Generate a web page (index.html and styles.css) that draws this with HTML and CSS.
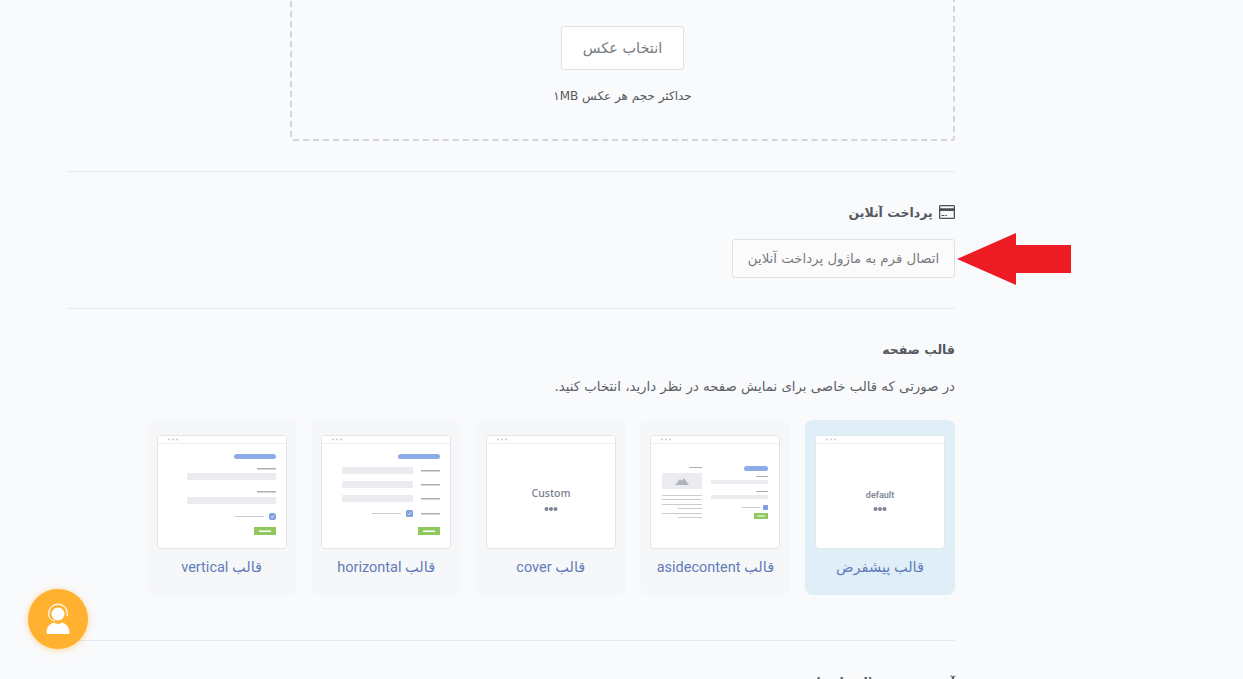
FILE: index.html
```html
<!DOCTYPE html>
<html lang="fa" dir="rtl">
<head>
    <meta charset="UTF-8">
    <meta name="viewport" content="width=device-width, initial-scale=1.0">
    <title>تنظیمات فرم</title>
    <link rel="stylesheet" href="styles.css">
</head>
<body>

<div class="page">

    <!-- آپلود عکس -->
    <div class="upload-box">
        <div class="upload-or">یا</div>
        <button class="btn upload-btn">انتخاب عکس</button>
        <div class="upload-hint">حداکثر حجم هر عکس ۱MB</div>
    </div>

    <hr class="divider">

    <!-- پرداخت آنلاین -->
    <section class="payment">
        <h3 class="title">
            <svg class="card-icon" viewBox="0 0 16 14" width="16" height="14">
                <path fill="#4b4f56" fill-rule="evenodd" d="M1.5 0h13A1.5 1.5 0 0 1 16 1.5v11a1.5 1.5 0 0 1-1.5 1.5h-13A1.5 1.5 0 0 1 0 12.500v-11A1.500 1.500 0 0 1 1.500 0zM1.300 1.300v2h13.400v-2zM1.300 6v6.700h13.400V6zM2.500 10h3v1h-3zm4 0h1.500v1H6.500z"/>
            </svg>
            پرداخت آنلاین
        </h3>
        <div class="payment-row">
            <button class="btn payment-btn">اتصال فرم به ماژول پرداخت آنلاین</button>
            <svg class="arrow" viewBox="0 0 116 54" width="116" height="54">
                <polygon fill="#ed1c24" points="0,27 59,1 59,13 114,13 114,41 59,41 59,53"/>
            </svg>
        </div>
    </section>

    <hr class="divider">

    <!-- قالب صفحه -->
    <section class="templates">
        <h3 class="title">قالب صفحه</h3>
        <p class="desc">در صورتی که قالب خاصی برای نمایش صفحه در نظر دارید، انتخاب کنید.</p>

        <div class="template-list">

            <div class="template active">
                <div class="thumb">
                    <svg viewBox="0 0 130 114" width="130" height="114">
                        <rect class="bar" x="1" y="1" width="128" height="7"/>
                        <path class="bar-line" d="M1 8.500h128"/>
                        <circle class="dot" cx="12" cy="4.500" r="1"/><circle class="dot" cx="16" cy="4.500" r="1"/><circle class="dot" cx="20" cy="4.500" r="1"/>
                        <text class="thumb-text narrow" x="65" y="63" text-anchor="middle">default</text>
                        <circle class="dark-dot" cx="60.500" cy="74" r="2"/><circle class="dark-dot" cx="65" cy="74" r="2"/><circle class="dark-dot" cx="69.500" cy="74" r="2"/>
                    </svg>
                </div>
                <div class="template-name">قالب پیشفرض</div>
            </div>

            <div class="template">
                <div class="thumb">
                    <svg viewBox="0 0 130 114" width="130" height="114">
                        <rect class="bar" x="1" y="1" width="128" height="7"/>
                        <path class="bar-line" d="M1 8.500h128"/>
                        <circle class="dot" cx="12" cy="4.500" r="1"/><circle class="dot" cx="16" cy="4.500" r="1"/><circle class="dot" cx="20" cy="4.500" r="1"/>
                        <rect class="pill" x="94" y="31" width="24" height="5" rx="2.500"/>
                        <rect class="line" x="106" y="41" width="12" height="1"/>
                        <rect class="field" x="61" y="45" width="57" height="4"/>
                        <rect class="line" x="106" y="56" width="12" height="1"/>
                        <rect class="field" x="61" y="60" width="57" height="4"/>
                        <rect class="thin" x="92" y="72" width="18" height="1"/>
                        <rect class="check" x="113" y="70" width="5" height="5" rx="1"/>
                        <rect class="green" x="104" y="78" width="14" height="6"/>
                        <rect class="white" x="107" y="80.500" width="8" height="1"/>
                        <rect class="line" x="39" y="32" width="13" height="1"/>
                        <rect class="field" x="12" y="38" width="40" height="16"/>
                        <polygon class="mount" points="25,50 30,44 32,46 34,43 39,50"/>
                        <rect class="thin" x="12" y="60" width="40" height="1"/>
                        <rect class="thin" x="12" y="64" width="40" height="1"/>
                        <rect class="thin" x="12" y="69" width="40" height="1"/>
                        <rect class="thin" x="28" y="73" width="24" height="1"/>
                        <rect class="thin" x="12" y="78" width="40" height="1"/>
                        <rect class="thin" x="28" y="82" width="24" height="1"/>
                    </svg>
                </div>
                <div class="template-name">قالب asidecontent</div>
            </div>

            <div class="template">
                <div class="thumb">
                    <svg viewBox="0 0 130 114" width="130" height="114">
                        <rect class="bar" x="1" y="1" width="128" height="7"/>
                        <path class="bar-line" d="M1 8.500h128"/>
                        <circle class="dot" cx="12" cy="4.500" r="1"/><circle class="dot" cx="16" cy="4.500" r="1"/><circle class="dot" cx="20" cy="4.500" r="1"/>
                        <text class="thumb-text" x="65" y="62" text-anchor="middle">Custom</text>
                        <circle class="dark-dot" cx="60.500" cy="74" r="2"/><circle class="dark-dot" cx="65" cy="74" r="2"/><circle class="dark-dot" cx="69.500" cy="74" r="2"/>
                    </svg>
                </div>
                <div class="template-name">قالب cover</div>
            </div>

            <div class="template">
                <div class="thumb">
                    <svg viewBox="0 0 130 114" width="130" height="114">
                        <rect class="bar" x="1" y="1" width="128" height="7"/>
                        <path class="bar-line" d="M1 8.500h128"/>
                        <circle class="dot" cx="12" cy="4.500" r="1"/><circle class="dot" cx="16" cy="4.500" r="1"/><circle class="dot" cx="20" cy="4.500" r="1"/>
                        <rect class="pill" x="77" y="19" width="42" height="5" rx="2.500"/>
                        <rect class="field" x="21" y="32" width="71" height="7"/>
                        <rect class="line" x="100" y="35" width="19" height="1.500"/>
                        <rect class="field" x="21" y="46" width="71" height="7"/>
                        <rect class="line" x="100" y="49" width="19" height="1.500"/>
                        <rect class="field" x="21" y="60" width="71" height="7"/>
                        <rect class="line" x="100" y="63" width="19" height="1.500"/>
                        <rect class="thin" x="51" y="78" width="29" height="1"/>
                        <rect class="check" x="85" y="75" width="7" height="7" rx="1.500"/>
                        <path class="tick" d="M86.800 78.500l1.300 1.300 2.200-2.600"/>
                        <rect class="line" x="100" y="78" width="19" height="1.500"/>
                        <rect class="green" x="97" y="92" width="22" height="8"/>
                        <rect class="white" x="102" y="95.500" width="12" height="1.500"/>
                    </svg>
                </div>
                <div class="template-name">قالب horizontal</div>
            </div>

            <div class="template">
                <div class="thumb">
                    <svg viewBox="0 0 130 114" width="130" height="114">
                        <rect class="bar" x="1" y="1" width="128" height="7"/>
                        <path class="bar-line" d="M1 8.500h128"/>
                        <circle class="dot" cx="12" cy="4.500" r="1"/><circle class="dot" cx="16" cy="4.500" r="1"/><circle class="dot" cx="20" cy="4.500" r="1"/>
                        <rect class="pill" x="77" y="19" width="42" height="5" rx="2.500"/>
                        <rect class="line" x="100" y="33" width="19" height="1.500"/>
                        <rect class="field" x="30" y="38" width="89" height="7"/>
                        <rect class="line" x="100" y="56" width="19" height="1.500"/>
                        <rect class="field" x="30" y="62" width="89" height="7"/>
                        <rect class="thin" x="78" y="81" width="29" height="1"/>
                        <rect class="check" x="112" y="78" width="7" height="7" rx="2.500"/>
                        <path class="tick" d="M113.800 81.500l1.300 1.300 2.200-2.600"/>
                        <rect class="green" x="97" y="92" width="22" height="8"/>
                        <rect class="white" x="102" y="95.500" width="12" height="1.500"/>
                    </svg>
                </div>
                <div class="template-name">قالب vertical</div>
            </div>

        </div>
    </section>

    <hr class="divider last">

    <h3 class="title page-url">آدرس صفحه (اختیاری)</h3>

</div>

<!-- دکمه پشتیبانی -->
<div class="support">
    <svg viewBox="0 0 32 32" width="32" height="32">
        <path fill="#fff" d="M6 31c-1 0-1.500-.6-1.500-1.500 0-5.500 3.500-9 7.500-10 1.200 1 2.500 1.400 4 1.400s2.800-.4 4-1.400c4 1 7.500 4.500 7.500 10 0 .9-.5 1.500-1.500 1.500z"/>
        <circle fill="#fff" cx="16" cy="11" r="6.500"/>
        <path fill="none" stroke="#fff" stroke-width="1.200" d="M6.700 13V10.500a9.300 9.300 0 0 1 18.600 0V13"/>
        <path fill="none" stroke="#fff" stroke-width="1" d="M7 13c.5 3 3 4.500 6 4.800"/>
    </svg>
</div>

</body>
</html>
```

FILE: styles.css
```css
html, body {
    height: 679px;
    overflow: hidden;
}
body {
    margin: 0;
    background-color: #f9fafc;
    font-family: "DejaVu Sans", sans-serif;
    color: #55585e;
}
.page {
    width: 887px;
    margin: -33px 288px 0 0;
}
.upload-box {
    width: 661px;
    height: 170px;
    border: 2px dashed #d3d5d9;
    border-radius: 3px;
    text-align: center;
    font-size: 12px;
}
.upload-or {
    height: 29px;
    padding-top: 16px;
    line-height: 17px;
    color: #777;
}
.btn {
    background: #fff;
    border: 1px solid #dfe1e5;
    border-radius: 3px;
    font-family: "DejaVu Sans", sans-serif;
    color: #777a80;
}
.upload-btn {
    width: 123px;
    height: 44px;
    margin-top: 12px;
    font-size: 14.500px;
}
.upload-hint {
    margin-top: 17px;
    font-size: 12px;
    line-height: 18px;
    color: #55585e;
}
.divider {
    height: 1px;
    margin: 30px 0 0;
    border: 0;
    background: #e7e9ed;
}
.title {
    margin: 0;
    font-size: 12.500px;
    line-height: 18px;
    font-weight: bold;
    color: #55585e;
}
.payment {
    height: 106px;
    padding-top: 32px;
    box-sizing: border-box;
}
.card-icon {
    margin-left: 2px;
    vertical-align: -2px;
}
.payment-row {
    position: relative;
    margin-top: 17px;
}
.payment-btn {
    display: block;
    width: 223px;
    height: 39px;
    font-size: 13.300px;
    background: #fbfbfc;
}
.arrow {
    position: absolute;
    right: -118px;
    top: -7px;
}
.templates {
    padding-top: 32px;
}
.templates + .divider {
    margin-top: 45px;
}
.desc {
    margin: 19px 0 0;
    font-size: 13.300px;
    line-height: 18px;
    color: #5d6066;
}
.template-list {
    display: flex;
    gap: 14.600px;
    margin-top: 24px;
}
.template {
    width: 150px;
    height: 175px;
    padding-top: 15px;
    box-sizing: border-box;
    background: #f6f7f8;
    border-radius: 8px;
    text-align: center;
}
.template.active {
    background: #e0eef7;
}
.thumb {
    width: 130px;
    height: 114px;
    margin: 0 auto;
    background: #fff;
    border: 1px solid #e3e5e8;
    border-radius: 4px;
    box-sizing: border-box;
    overflow: hidden;
}
.thumb svg {
    display: block;
    margin: -1px;
}
.bar { fill: #fff; }
.bar-line { stroke: #eef0f2; stroke-width: 1; }
.dot { fill: #c9ccd2; }
.dark-dot { fill: #7d8593; }
.pill { fill: #8dabe6; }
.line { fill: #a9adb5; }
.thin { fill: #c9ccd2; }
.field { fill: #eaecef; }
.check { fill: #7fa0dd; }
.tick { fill: none; stroke: #fff; stroke-width: 0.800; }
.green { fill: #8fc95c; }
.white { fill: #fff; }
.mount { fill: #aeb4bf; }
.thumb-text {
    font-family: "Open Sans", sans-serif;
    font-size: 10.500px;
    font-weight: 600;
    fill: #7d8593;
}
.thumb-text.narrow {
    font-family: "Roboto", sans-serif;
    font-size: 9px;
}
.template-name {
    margin-top: 9px;
    font-family: "Roboto", "DejaVu Sans", sans-serif;
    font-size: 14.500px;
    line-height: 20px;
    color: #5f7cba;
}
.page-url {
    margin-top: 33px;
}
.support {
    position: absolute;
    left: 28px;
    top: 589px;
    width: 60px;
    height: 60px;
    display: flex;
    align-items: center;
    justify-content: center;
    border-radius: 50%;
    background: #ffb12f;
    box-shadow: 0 1px 6px rgba(255, 177, 47, 0.5);
}
```
